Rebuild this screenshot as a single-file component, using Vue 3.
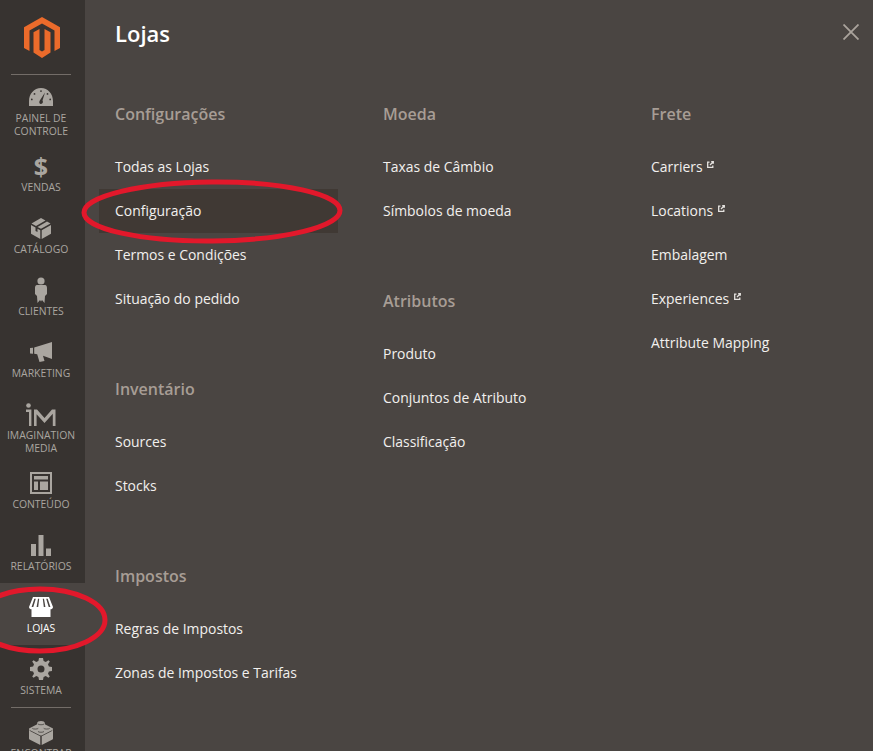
<script setup>
const nav = [
  { id: 'painel', label: ['PAINEL DE', 'CONTROLE'], first: true },
  { id: 'vendas', label: ['VENDAS'] },
  { id: 'catalogo', label: ['CATÁLOGO'] },
  { id: 'clientes', label: ['CLIENTES'] },
  { id: 'marketing', label: ['MARKETING'] },
  { id: 'im', label: ['IMAGINATION', 'MEDIA'] },
  { id: 'conteudo', label: ['CONTEÚDO'] },
  { id: 'relatorios', label: ['RELATÓRIOS'] },
  { id: 'lojas', label: ['LOJAS'], active: true },
  { id: 'sistema', label: ['SISTEMA'] },
]
const columns = [
  [
    { title: 'Configurações', links: [{ t: 'Todas as Lojas' }, { t: 'Configuração', hi: true }, { t: 'Termos e Condições' }, { t: 'Situação do pedido' }] },
    { title: 'Inventário', links: [{ t: 'Sources' }, { t: 'Stocks' }] },
    { title: 'Impostos', links: [{ t: 'Regras de Impostos' }, { t: 'Zonas de Impostos e Tarifas' }] },
  ],
  [
    { title: 'Moeda', links: [{ t: 'Taxas de Câmbio' }, { t: 'Símbolos de moeda' }] },
    { title: 'Atributos', links: [{ t: 'Produto' }, { t: 'Conjuntos de Atributo' }, { t: 'Classificação' }] },
  ],
  [
    { title: 'Frete', links: [{ t: 'Carriers', ext: true }, { t: 'Locations', ext: true }, { t: 'Embalagem' }, { t: 'Experiences', ext: true }, { t: 'Attribute Mapping' }] },
  ],
]
</script>

<template>
  <div class="page">
    <aside class="side">
      <div class="logo">
        <svg width="36" height="41" viewBox="0 0 36 41" fill="#eb6b2b">
          <path d="M18 0 36 10.300V31L30.500 34V13.500L18 6.500 5.500 13.500V34L0 31V10.300Z" />
          <path d="M15.500 12V33L18 34.500 20.500 33V12L26.500 15.300V35.500L18 41 9.500 35.500V15.300Z" />
        </svg>
      </div>
      <div class="rule"></div>
      <a v-for="n in nav" :key="n.id" class="item" :class="{ active: n.active, two: n.label.length > 1, first: n.first }">
        <span class="ico">
          <svg v-if="n.id === 'painel'" width="24" height="18" viewBox="0 0 24 18" fill="currentColor">
            <path d="M12 0C5 0 0 6 0 13V18H24V13C24 6 19 0 12 0ZM12 2.200A.9.9 0 1 1 12 4 .9.9 0 0 1 12 2.200ZM5.500 5A.9.9 0 1 1 5.500 6.800 .9.9 0 0 1 5.500 5ZM18.500 5A.9.9 0 1 1 18.500 6.800 .9.9 0 0 1 18.500 5ZM2.800 10.500A.9.9 0 1 1 2.800 12.300 .9.9 0 0 1 2.800 10.500ZM21.200 10.500A.9.9 0 1 1 21.200 12.300 .9.9 0 0 1 21.200 10.500ZM16 4.500 13.500 12.600C14.400 13.800 13.800 16 12 16 10.200 16 9.800 14 10.800 12.500Z" fill-rule="evenodd" />
          </svg>
          <span v-else-if="n.id === 'vendas'" class="dollar">$</span>
          <svg v-else-if="n.id === 'catalogo'" width="20" height="21" viewBox="0 0 20 21" fill="currentColor">
            <path d="M10 0 14.500 2.500 5 8 .5 5.500ZM16 3.400 19.500 5.500 10 10.800 6.500 8.900ZM0 7 4.500 9.500V13L6.500 14.100V10.700L9.300 12.300V21L0 15.800ZM20 7V15.800L10.700 21V12.300Z" />
          </svg>
          <svg v-else-if="n.id === 'clientes'" width="12" height="26" viewBox="0 0 12 26" fill="currentColor">
            <circle cx="6" cy="4" r="3.600" />
            <path d="M2 8H10C11.500 8 12 9.500 12 11V17L10 19 9.500 26 7 23 6 24.500 5 23 2.500 26 2 19 0 17V11C0 9.500.5 8 2 8Z" />
          </svg>
          <svg v-else-if="n.id === 'marketing'" width="22" height="20" viewBox="0 0 22 20" fill="currentColor">
            <path d="M0 6 3 5.700V11.700L0 11.400ZM4.200 5.600 22 0V17L13 13.800 14.500 19 9.500 20 7.200 12.200 4.200 11.800Z" />
          </svg>
          <svg v-else-if="n.id === 'im'" width="30" height="23" viewBox="0 0 30 23" fill="currentColor">
            <circle cx="2.500" cy="2.500" r="2.300" />
            <path d="M0 6.500H5.400V23H3V9H0ZM8 6.500H11L18.500 15 26 6.500H29.500V23H26.800V10.800L18.500 20 10.600 11.200V23H8Z" />
          </svg>
          <svg v-else-if="n.id === 'conteudo'" width="22" height="22" viewBox="0 0 22 22" fill="currentColor" fill-rule="evenodd">
            <path d="M0 0H22V22H0ZM2 2V20H20V2ZM4 4H18V7.500H4ZM4 9.500H8V18H4ZM10 9.500H18V18H10Z" />
          </svg>
          <svg v-else-if="n.id === 'relatorios'" width="20" height="21" viewBox="0 0 20 21" fill="currentColor">
            <path d="M0 9H5V21H0ZM7.500 0H12.500V21H7.500ZM15 13.500H20V21H15Z" />
          </svg>
          <svg v-else-if="n.id === 'lojas'" width="24" height="20" viewBox="0 0 24 20" fill="currentColor">
            <path d="M4 0H20L24 10C24 11.500 22.500 12.300 21.500 12.300V20H2.500V12.300C1.500 12.300 0 11.500 0 10ZM5.300 1.800 2.600 10H4.300L6.800 1.800ZM9 1.800 7.600 10H9.200L10.200 1.800ZM13.800 1.800 14.800 10H16.400L15 1.800ZM17.200 1.800 19.700 10H21.400L18.700 1.800Z" fill-rule="evenodd" />
          </svg>
          <svg v-else-if="n.id === 'sistema'" width="22" height="22" viewBox="0 0 22 22" fill="currentColor">
            <path fill-rule="evenodd" d="M9 0H13L13.600 3.100 15.800 4 18.400 2.200 19.800 3.600 18 6.200 18.900 8.400 22 9V13L18.900 13.600 18 15.800 19.800 18.400 18.400 19.800 15.800 18 13.600 18.900 13 22H9L8.400 18.900 6.200 18 3.600 19.800 2.200 18.400 4 15.800 3.100 13.600 0 13V9L3.100 8.400 4 6.200 2.200 3.600 3.600 2.200 6.200 4 8.400 3.100ZM11 7.500A3.500 3.500 0 1 0 11 14.500 3.500 3.500 0 0 0 11 7.500Z" />
          </svg>
        </span>
        <span class="lab"><span v-for="l in n.label" :key="l">{{ l }}</span></span>
      </a>
      <div class="rule low"></div>
      <a class="item">
        <span class="ico lego">
          <svg width="24" height="24" viewBox="0 0 24 24" fill="currentColor">
            <path d="M12 0C9.800 0 8.200.9 8.200 2V3.300L0 7.500C0 9 .8 9.800 1.500 10.200L11.300 15.200V24L.5 18.500C.2 18.300 0 18 0 17.500V8.800L11.300 14.500H12.700L24 8.800V17.500C24 18 23.800 18.300 23.500 18.500L12.700 24V15.200L22.500 10.200C23.200 9.800 24 9 24 7.500L15.800 3.300V2C15.800.9 14.200 0 12 0Z" />
            <g fill="none" stroke="#373330" stroke-width=".7">
              <path d="M9 3C9.500 4 14.500 4 15 3" />
              <path d="M3.300 7.300C3.800 8.300 8.800 8.300 9.300 7.300" />
              <path d="M14.700 7.300C15.200 8.300 20.200 8.300 20.700 7.300" />
              <path d="M9 10.500C9.500 11.500 14.500 11.500 15 10.500" />
            </g>
          </svg>
        </span>
        <span class="lab"><span>ENCONTRAR</span></span>
      </a>
    </aside>

    <main class="panel">
      <h1 class="title">Lojas</h1>
      <button class="close" aria-label="Fechar">
        <svg width="16" height="16" viewBox="0 0 16 16" stroke="currentColor" stroke-width="1.800" fill="none">
          <path d="M0.500 0.500 15.500 15.500M15.500 0.500 0.500 15.500" />
        </svg>
      </button>
      <div class="cols">
        <div v-for="(c, i) in columns" :key="i" class="col">
          <section v-for="g in c" :key="g.title" class="group">
            <h2>{{ g.title }}</h2>
            <a v-for="l in g.links" :key="l.t" class="link" :class="{ hi: l.hi }">
              {{ l.t }}
              <svg v-if="l.ext" class="ext" width="7" height="7" viewBox="0 0 7 7" fill="none" stroke="currentColor" stroke-width="1.300">
                <path d="M5.800 4.500V6.300H.7V1.200H2.500M3 4 6.300.7M4.200 .7H6.300V2.800" />
              </svg>
            </a>
          </section>
        </div>
      </div>
    </main>

    <svg class="marks" width="873" height="751" viewBox="0 0 873 751" fill="none" stroke="#e2182b" stroke-width="5">
      <ellipse cx="212" cy="211.500" rx="128" ry="29.500" transform="rotate(-0.500 212 211.500)" />
      <ellipse cx="40" cy="620" rx="65" ry="31" />
    </svg>
  </div>
</template>

<style>
html, body { margin: 0; background: #4a4542; }
</style>

<style scoped>
.page {
  position: relative;
  display: flex;
  width: 873px;
  height: 751px;
  overflow: hidden;
  font-family: "Open Sans", sans-serif;
  background: #4a4542;
}
.side {
  flex: 0 0 85px;
  width: 85px;
  background: #373330;
  display: flex;
  flex-direction: column;
  overflow: hidden;
}
.logo {
  height: 74px;
  flex: none;
  display: flex;
  justify-content: center;
  padding-top: 17px;
  box-sizing: border-box;
}
.logo svg { margin-left: -1px; }
.rule {
  flex: none;
  height: 1px;
  margin: 0 14px 0 11px;
  background: #736d68;
}
.item {
  flex: none;
  display: block;
  height: 62px;
  color: #aaa6a0;
  box-sizing: border-box;
}
.item.two { height: 69px; }
.item.first { height: 67px; }
.item.active { background: #4a4542; color: #fff; }
.ico {
  display: flex;
  height: 38.500px;
  align-items: center;
  justify-content: center;
  padding-right: 3px;
  padding-top: 9.500px;
  box-sizing: border-box;
}
.first .ico { height: 36.500px; padding-top: 7.500px; }
.ico.lego { padding-top: 11px; }
.lab {
  display: block;
  margin-right: 3px;
  text-align: center;
  font-size: 10.400px;
  line-height: 13px;
}
.lab span { display: block; white-space: nowrap; }
.dollar { font-size: 25px; font-weight: 700; line-height: 1; }
.panel {
  position: relative;
  flex: 1;
  min-width: 0;
  padding: 18px 0 0 14px;
  box-sizing: border-box;
}
.title {
  margin: 0 0 55px 16px;
  font-size: 22px;
  line-height: 30px;
  font-weight: 600;
  color: #fff;
}
.close {
  position: absolute;
  top: 24px;
  right: 14px;
  width: 16px;
  height: 16px;
  padding: 0;
  border: 0;
  background: none;
  color: #aaa39c;
  display: block;
}
.close svg { display: block; }
.cols { display: flex; }
.col { flex: 0 0 268px; }
.group { width: 239px; margin-bottom: 57px; }
h2 {
  margin: 0 0 20px 16px;
  font-size: 16px;
  line-height: 22px;
  font-weight: 600;
  color: #a79d95;
}
.link {
  display: block;
  height: 44px;
  line-height: 44px;
  padding-left: 16px;
  font-size: 13.950px;
  color: #f2f0ee;
  white-space: nowrap;
}
.link.hi { background: #403934; }
.ext { vertical-align: 4px; margin-left: 1px; color: #e6e3e0; }
.marks { position: absolute; left: 0; top: 0; pointer-events: none; }
</style>
